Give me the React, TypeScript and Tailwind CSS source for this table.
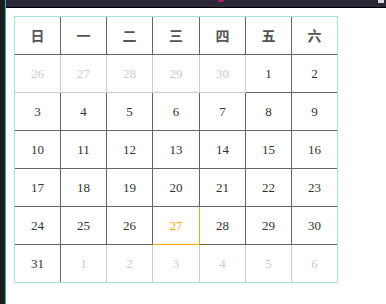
import React from "react";

type Day = { n: number; muted?: boolean; today?: boolean };

const heads = ["日", "一", "二", "三", "四", "五", "六"];

const days: Day[] = [
  ...[26, 27, 28, 29, 30].map((n) => ({ n, muted: true })),
  ...Array.from({ length: 31 }, (_, i) => ({ n: i + 1, today: i + 1 === 27 })),
  ...[1, 2, 3, 4, 5, 6].map((n) => ({ n, muted: true })),
];

// every cell draws its own right and bottom line; the outer frame closes the rest
const cellBorder = (col: number, lastRow: boolean, color: string) => {
  const r = col < 6 ? "border-r" : "";
  const b = lastRow ? "" : "border-b";
  return `${r} ${b} ${color}`;
};

const App = () => {
  return (
    <div className="flex h-[304px] w-[386px] bg-white overflow-hidden">
      <div className="w-[5px] bg-[#1e1e1e]" />
      <div className="w-px bg-[#22b8c4]" />
      <div className="flex flex-1 flex-col">
        <div className="flex h-[8px] items-start border-b border-black bg-[#2a2838]">
          <span className="ml-[212px] h-[2px] w-[6px] rounded-b-full bg-[#b8206a]" />
          <span className="ml-auto mr-[2px] h-[3px] w-[6px] bg-[#d8d8d8]" />
        </div>
        <div className="pl-[8px] pt-[8px]">
          <div className="grid w-[324px] grid-cols-[46px_46px_46px_47px_46px_46px_45px] border border-[#a6dfe0] [font-family:'Liberation_Serif',serif]">
            {heads.map((h, i) => (
              <div
                key={h}
                className={`flex h-[38px] items-center justify-center text-[14px] font-semibold text-[#555] [font-family:'Noto_Sans_CJK_SC',sans-serif] ${cellBorder(i, false, "border-[#666]")}`}
              >
                {h}
              </div>
            ))}
            {days.map((d, i) => {
              const col = i % 7;
              const lastRow = i >= 35;
              const line = d.today
                ? "border-[#ffa500]"
                : d.muted
                ? "border-[#ccc]"
                : "border-[#666]";
              const tone = d.today
                ? "text-[#ffa500]"
                : d.muted
                ? "text-[#ccc]"
                : "text-[#333]";
              return (
                <div
                  key={i}
                  className={`flex items-center justify-center text-[13px] ${
                    lastRow ? "h-[37px]" : "h-[38px]"
                  } ${tone} ${cellBorder(col, lastRow, line)}`}
                >
                  {d.n}
                </div>
              );
            })}
          </div>
        </div>
      </div>
    </div>
  );
};

export default App;
